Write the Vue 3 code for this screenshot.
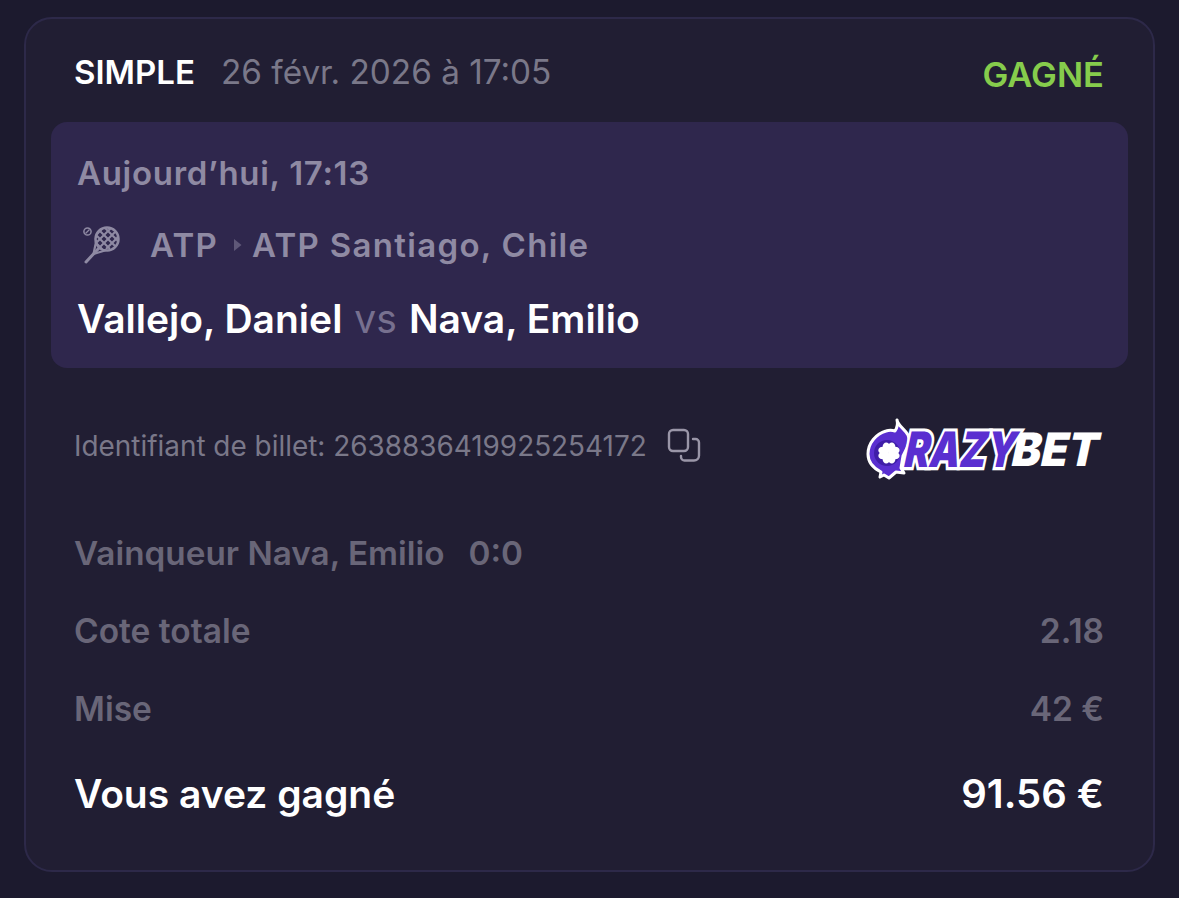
<script setup>
const rows = [
  { label: 'Cote totale', value: '2.18' },
  { label: 'Mise', value: '42 €' }
]
const meshLines = [-24, -16, -8, 0, 8, 16, 24]
</script>

<template>
  <main class="page">
    <section class="card">
      <header class="head">
        <div class="head-left">
          <span class="type">SIMPLE</span>
          <span class="date">26 févr. 2026 à 17:05</span>
        </div>
        <span class="status">GAGNÉ</span>
      </header>

      <div class="event">
        <div class="when">Aujourd’hui, 17:13</div>
        <div class="league">
          <svg class="racket" viewBox="0 0 40 40" width="40" height="40" fill="none" stroke="#8f8aa3">
            <defs>
              <clipPath id="racketHead"><circle cx="25" cy="14" r="11" /></clipPath>
            </defs>
            <circle cx="5.500" cy="6.500" r="3.600" stroke-width="1.500" />
            <path d="M3.500 8.500 7.500 4.500" stroke-width="1.200" />
            <g clip-path="url(#racketHead)" stroke-width="2">
              <path v-for="n in meshLines" :key="'a' + n" :d="`M${n + 14} -6 L${n + 44} 24`" />
              <path v-for="n in meshLines" :key="'b' + n" :d="`M${n + 8} 24 L${n + 38} -6`" />
            </g>
            <circle cx="25" cy="14" r="11.500" stroke-width="2.500" />
            <path d="M17 23 4 37" stroke-width="3" stroke-linecap="round" />
            <path d="M14 17 11.500 29M23 25.500 11.500 29" stroke-width="2.200" stroke-linecap="round" />
          </svg>
          <span class="crumb">ATP</span>
          <svg class="caret" viewBox="0 0 9 14" width="9" height="14"><path d="M1 1 8.500 7 1 13Z" fill="#5f5878" /></svg>
          <span class="crumb">ATP Santiago, Chile</span>
        </div>
        <div class="teams">
          <span>Vallejo, Daniel</span>
          <span class="vs">vs</span>
          <span>Nava, Emilio</span>
        </div>
      </div>

      <div class="ticket">
        <div class="ticket-id">
          <span>Identifiant de billet: 2638836419925254172</span>
          <svg class="copy" viewBox="0 0 34 36" width="34" height="36" fill="none" stroke="#9a96a8" stroke-width="2.400">
            <rect x="2" y="2" width="19" height="21" rx="4" />
            <path d="M26 11h2.500a3.500 3.500 0 0 1 3.500 3.500v13a5 5 0 0 1-5 5H17.500a3.500 3.500 0 0 1-3.500-3.500V28" stroke-linecap="round" />
          </svg>
        </div>
        <div class="logo">
          <svg class="logo-mark" viewBox="0 0 48 62" width="48" height="62">
            <path d="M31 2c1 6 8 9 11 15 2 5 1 9-1 13l-4 8-2 12 3 5-8-1-7 6-5-3-4 2 1-5C7 50 2 44 2 36 2 25 10 16 20 13c3-1 6-1 9 0 2-3 3-7 2-11Z" fill="#5a2fd0" stroke="#fff" stroke-width="3" stroke-linejoin="round" />
            <circle cx="21" cy="35" r="13" fill="#3f1ea8" />
            <g transform="translate(23 35)" fill="#fff">
              <path v-for="a in [45, 135, 225, 315]" :key="a" :transform="`rotate(${a})`" d="M0 0C-1.500-2-6-2.500-6.500-7-6.500-10.500-2.500-11.500 0-9 2.500-11.500 6.500-10.500 6.500-7 6-2.500 1.500-2 0 0Z" />
            </g>
          </svg>
          <span class="crazy">RAZY</span>
          <span class="bet">BET</span>
        </div>
      </div>

      <div class="pick">
        <span>Vainqueur Nava, Emilio</span>
        <span>0:0</span>
      </div>

      <div v-for="row in rows" :key="row.label" class="row">
        <span>{{ row.label }}</span>
        <span>{{ row.value }}</span>
      </div>

      <div class="total">
        <span>Vous avez gagné</span>
        <span class="amount">91.56 €</span>
      </div>
    </section>
  </main>
</template>

<style>
html, body { margin: 0; background: #1c1a2e; }
</style>

<style scoped>
.page {
  width: 1179px;
  height: 898px;
  box-sizing: border-box;
  padding: 17px 24px 26px 24px;
  background: #1c1a2e;
  font-family: Inter, "Noto Sans", sans-serif;
  overflow: hidden;
}
.card {
  box-sizing: border-box;
  height: 855px;
  padding: 0 25px;
  background: #211e33;
  border: 2px solid #2d2949;
  border-radius: 28px;
}
.head {
  height: 103px;
  box-sizing: border-box;
  padding: 31px 24px 0 23px;
  display: flex;
  justify-content: space-between;
  align-items: flex-start;
}
.head-left { display: flex; align-items: baseline; gap: 26px; }
.type { font-size: 33px; line-height: 44px; font-weight: 600; color: #fff; }
.date { font-size: 33.300px; line-height: 44px; color: #7a7889; }
.status { font-size: 34.500px; line-height: 50px; font-weight: 600; color: #86cc4c; }

.event {
  height: 246px;
  box-sizing: border-box;
  padding: 28px 27px 0 26px;
  background: #2f274d;
  border-radius: 16px;
}
.when { font-size: 33px; line-height: 47px; font-weight: 600; letter-spacing: 0.700px; color: #8f8aa3; }
.league {
  display: flex;
  align-items: center;
  margin-top: 25px;
  height: 46px;
  font-size: 33px;
  font-weight: 600;
  letter-spacing: 1.300px;
  color: #8f8aa3;
}
.racket { margin-left: 5px; margin-right: 28px; }
.caret { margin: 0 10px 0 15px; }
.teams {
  display: flex;
  gap: 12px;
  margin-top: 27px;
  font-size: 39px;
  line-height: 48px;
  font-weight: 600;
  color: #fff;
}
.vs { color: #77708f; font-weight: 400; }

.ticket {
  height: 146px;
  box-sizing: border-box;
  padding: 46px 24px 0 23px;
  display: flex;
  justify-content: space-between;
  align-items: flex-start;
}
.ticket-id {
  display: flex;
  align-items: center;
  gap: 20px;
  height: 64px;
  font-size: 27.900px;
  color: #7a7889;
}
.logo {
  display: flex;
  align-items: center;
  height: 62px;
  padding-top: 4px;
  margin-right: 4px;
}
.logo-mark { margin-right: -8px; position: relative; z-index: 1; }
.crazy, .bet {
  display: block;
  font-weight: 900;
  line-height: 48px;
}
.crazy {
  font-size: 38px;
  color: #5a2fd0;
  -webkit-text-stroke: 5px #fff;
  paint-order: stroke fill;
  transform: skewX(-12deg) scaleY(1.280);
  position: relative;
  z-index: 2;
}
.bet {
  margin-left: -4px;
  font-size: 44px;
  color: #fff;
  transform: skewX(-12deg) scaleY(1.050);
}

.pick {
  display: flex;
  gap: 24px;
  padding: 0 24px 0 23px;
  height: 78px;
  align-items: center;
  font-size: 33.300px;
  font-weight: 600;
  color: #696678;
}
.row {
  display: flex;
  justify-content: space-between;
  padding: 0 24px 0 23px;
  height: 78px;
  align-items: center;
  font-size: 33.500px;
  font-weight: 600;
  color: #696678;
}
.total {
  display: flex;
  justify-content: space-between;
  padding: 0 24px 0 23px;
  height: 90px;
  align-items: center;
  font-size: 39px;
  font-weight: 600;
  color: #fff;
}
.amount { font-size: 40px; }
</style>
